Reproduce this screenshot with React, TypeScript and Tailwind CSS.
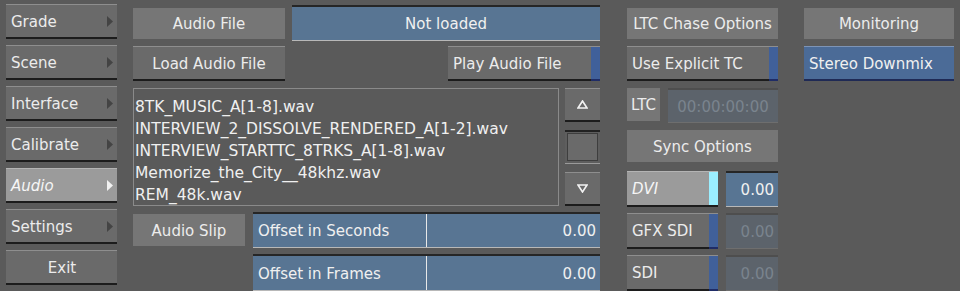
import React from 'react';

const menu = ['Grade', 'Scene', 'Interface', 'Calibrate', 'Audio', 'Settings', 'Exit'];

const files = [
  '8TK_MUSIC_A[1-8].wav',
  'INTERVIEW_2_DISSOLVE_RENDERED_A[1-2].wav',
  'INTERVIEW_STARTTC_8TRKS_A[1-8].wav',
  'Memorize_the_City__48khz.wav',
  'REM_48k.wav',
];

function Arrow({ light }: { light?: boolean }) {
  return (
    <svg width="6" height="11" viewBox="0 0 6 11" className="shrink-0">
      <path d="M0 0 L6 5.5 L0 11 Z" fill={light ? '#f2f2f2' : '#444444'} />
    </svg>
  );
}

function Label({ text, className = '' }: { text: string; className?: string }) {
  return (
    <div className={`flex items-center justify-center pt-[2px] bg-[#767676] text-[#ececec] ${className}`}>
      {text}
    </div>
  );
}

function Button({
  text,
  className = '',
  stripe,
  center,
}: {
  text: string;
  className?: string;
  stripe?: 'blue' | 'cyan';
  center?: boolean;
}) {
  return (
    <div
      className={`flex bg-[#6a6a6a] border-t border-t-[#8e8e8e] border-b-2 border-b-[#1c1c1c] text-[#ececec] ${className}`}
    >
      <div className={`flex flex-1 items-center px-[5px] pt-[2px] ${center ? 'justify-center' : ''}`}>{text}</div>
      {stripe === 'blue' && <div className="w-[9px] bg-[#40609a] border-b-2 border-b-[#1f2c66] -mb-[2px]" />}
      {stripe === 'cyan' && <div className="w-[9px] bg-[#9beeff]" />}
    </div>
  );
}

function Field({
  left,
  right,
  className = '',
  dim,
  center,
}: {
  left?: string;
  right?: string;
  className?: string;
  dim?: boolean;
  center?: boolean;
}) {
  return (
    <div
      className={`flex border-t-2 border-b ${
        dim
          ? 'bg-[#5c636b] border-t-[#4e4e4e] border-b-[#6e6e6e] text-[#7a848e]'
          : 'bg-[#587593] border-t-[#262626] border-b-[#b8b8b8] text-[#f0f0f0]'
      } ${className}`}
    >
      {left !== undefined && (
        <div className="flex items-center w-[174px] px-[5px] pt-[2px] border-r border-r-[#e8e8e8]">{left}</div>
      )}
      <div className={`flex flex-1 items-center px-[4px] pt-[2px] ${center ? 'justify-center' : 'justify-end'}`}>
        {right}
      </div>
    </div>
  );
}

export default function App() {
  return (
    <div
      className="w-[960px] h-[291px] overflow-hidden bg-[#5a5a5a] text-[15px] leading-none flex"
      style={{ fontFamily: '"DejaVu Sans", sans-serif' }}
    >
      {/* main menu */}
      <div className="flex flex-col gap-[6px] pt-[4px] pl-[6px] w-[117px] shrink-0">
        {menu.map((m) => {
          const active = m === 'Audio';
          return (
            <div
              key={m}
              className={`flex items-center h-[35px] border-t border-b-2 border-b-[#1c1c1c] pl-[5px] pr-[4px] ${
                active
                  ? 'bg-[#9b9b9b] border-t-[#b4b4b4] text-[#f6f6f6] italic'
                  : 'bg-[#6a6a6a] border-t-[#8e8e8e] text-[#ececec]'
              } ${m === 'Exit' ? 'justify-center' : 'justify-between'}`}
            >
              <span className="pt-[2px]">{m}</span>
              {m !== 'Exit' && <Arrow light={active} />}
            </div>
          );
        })}
      </div>

      {/* audio file panel */}
      <div className="flex flex-col ml-[16px] w-[467px] shrink-0 pt-[5px]">
        <div className="flex h-[36px] items-center">
          <Label text="Audio File" className="w-[152px] h-[31px] mt-[1px]" />
          <Field className="ml-[7px] flex-1 h-[36px]" right="Not loaded" center />
        </div>
        <div className="flex h-[35px] mt-[5px] justify-between">
          <Button text="Load Audio File" center className="w-[152px]" />
          <Button text="Play Audio File" stripe="blue" className="w-[152px]" />
        </div>
        <div className="flex h-[118px] mt-[7px]">
          <div className="w-[426px] border border-[#8a8a8a] flex flex-col pt-[7px] pl-[1px] text-[#f0f0f0] leading-[22px] text-[15.5px]">
            {files.map((f) => (
              <div key={f} className="whitespace-nowrap">
                {f}
              </div>
            ))}
          </div>
          <div className="ml-[6px] flex-1 flex flex-col gap-[8px]">
            <div className="h-[34px] flex items-center justify-center bg-[#6a6a6a] border-t border-t-[#8e8e8e] border-b-2 border-b-[#1c1c1c]">
              <svg width="11" height="9" viewBox="0 0 11 9">
                <path d="M5.5 1 L10 8 L1 8 Z" fill="none" stroke="#f2f2f2" strokeWidth="1.6" />
              </svg>
            </div>
            <div className="h-[35px] bg-[#5e5e5e] border-t-2 border-t-[#222] border-b border-b-[#9a9a9a] flex">
              <div className="flex-1 m-[2px] mt-[1px] bg-[#6a6a6a] border border-[#3e3e3e]" />
            </div>
            <div className="h-[34px] flex items-center justify-center bg-[#6a6a6a] border-t border-t-[#8e8e8e] border-b-2 border-b-[#1c1c1c]">
              <svg width="11" height="9" viewBox="0 0 11 9">
                <path d="M1 1 L10 1 L5.5 8 Z" fill="none" stroke="#f2f2f2" strokeWidth="1.6" />
              </svg>
            </div>
          </div>
        </div>
        <div className="flex h-[36px] mt-[6px] items-center">
          <Label text="Audio Slip" className="w-[112px] h-[32px]" />
          <Field className="ml-[8px] flex-1 h-[36px]" left="Offset in Seconds" right="0.00" />
        </div>
        <div className="flex h-[37px] mt-[6px]">
          <div className="w-[120px]" />
          <Field className="flex-1 h-[37px]" left="Offset in Frames" right="0.00" />
        </div>
      </div>

      {/* LTC / sync */}
      <div className="flex flex-col ml-[27px] w-[151px] shrink-0 pt-[5px]">
        <div className="h-[36px] flex items-center">
          <Label text="LTC Chase Options" className="w-full h-[31px]" />
        </div>
        <Button text="Use Explicit TC" stripe="blue" className="h-[35px] mt-[5px]" />
        <div className="flex h-[35px] mt-[7px]">
          <Label text="LTC" className="w-[33px] h-[33px]" />
          <Field dim center className="ml-[8px] flex-1 h-[35px]" right="00:00:00:00" />
        </div>
        <Label text="Sync Options" className="h-[32px] mt-[7px]" />
        {[
          { n: 'DVI', on: true },
          { n: 'GFX SDI', on: false },
          { n: 'SDI', on: false },
        ].map((r, i) => (
          <div key={r.n} className={`flex h-[36px] ${i === 0 ? 'mt-[9px]' : 'mt-[6px]'}`}>
            {r.on ? (
              <div className="flex w-[91px] bg-[#9b9b9b] border-t border-t-[#b4b4b4] border-b-2 border-b-[#1c1c1c] text-[#f6f6f6] italic">
                <div className="flex-1 flex items-center px-[5px] pt-[2px]">{r.n}</div>
                <div className="w-[9px] bg-[#9beeff]" />
              </div>
            ) : (
              <Button text={r.n} stripe="blue" className="w-[91px]" />
            )}
            <Field dim={!r.on} className="ml-[8px] flex-1" right="0.00" />
          </div>
        ))}
      </div>

      {/* monitoring */}
      <div className="flex flex-col ml-[26px] w-[150px] shrink-0 pt-[5px]">
        <div className="h-[36px] flex items-center">
          <Label text="Monitoring" className="w-full h-[31px]" />
        </div>
        <div className="h-[35px] mt-[5px] flex items-center px-[5px] pt-[2px] bg-[#4b6b97] border-t border-t-[#7d94b6] border-b-2 border-b-[#1f2a55] text-[#f0f0f0]">
          Stereo Downmix
        </div>
      </div>
    </div>
  );
}
